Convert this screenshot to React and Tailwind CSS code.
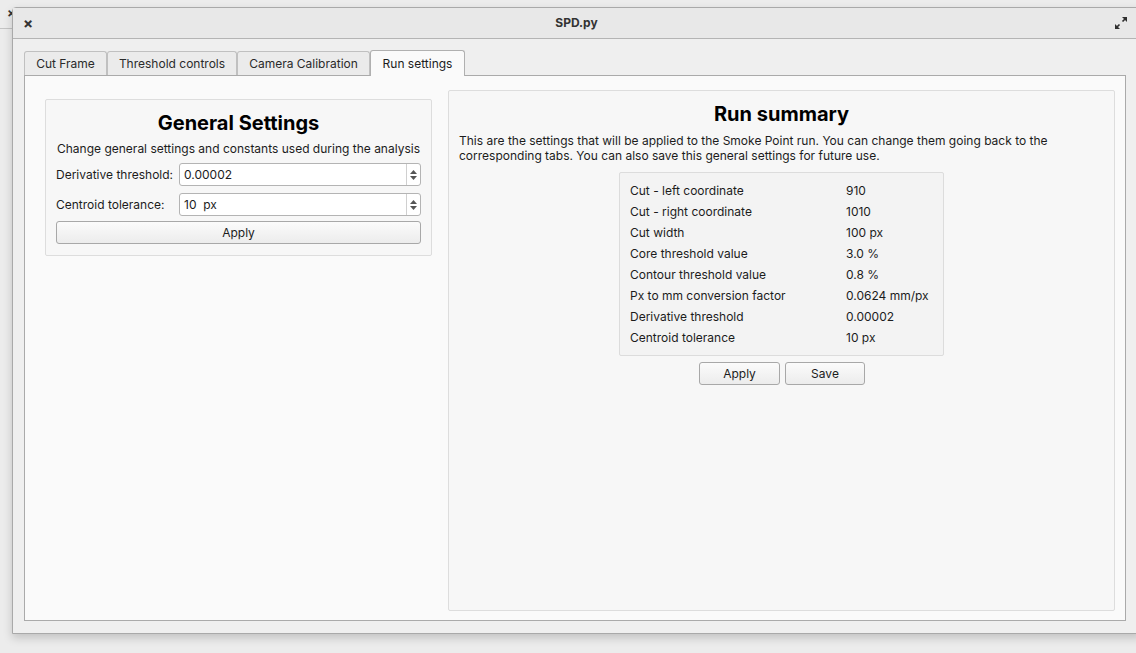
import React from 'react';

const font = { fontFamily: 'Inter, "Noto Sans", "Liberation Sans", sans-serif' };

const summary = [
  ['Cut - left coordinate', '910'],
  ['Cut - right coordinate', '1010'],
  ['Cut width', '100 px'],
  ['Core threshold value', '3.0 %'],
  ['Contour threshold value', '0.8 %'],
  ['Px to mm conversion factor', '0.0624 mm/px'],
  ['Derivative threshold', '0.00002'],
  ['Centroid tolerance', '10 px'],
];

const SpinBox = ({ value }) => (
  <div className="flex h-[23px] flex-1 items-stretch rounded-[3px] border border-[#b4b4b4] bg-white">
    <div className="flex flex-1 items-center whitespace-pre pl-[4px] text-[12px] text-[#1c1c1c]">{value}</div>
    <div className="flex w-[14px] flex-col items-center justify-center gap-[2px] border-l border-[#d0d0d0]">
      <svg width="7" height="4" viewBox="0 0 7 4"><path d="M0 4 L3.5 0 L7 4 Z" fill="#555" /></svg>
      <svg width="7" height="4" viewBox="0 0 7 4"><path d="M0 0 L3.5 4 L7 0 Z" fill="#555" /></svg>
    </div>
  </div>
);

const Button = ({ children, className = '' }) => (
  <button className={`flex h-[23px] items-center justify-center rounded-[3px] border border-[#a8a8a8] bg-gradient-to-b from-[#fbfbfb] to-[#ececec] text-[12px] text-[#1c1c1c] ${className}`}>
    {children}
  </button>
);

const Tab = ({ label, width, active }) => (
  <div
    className={
      active
        ? `flex h-[26px] items-center justify-center rounded-t-[3px] border border-b-0 border-[#b0b0b0] bg-[#fafafa] pt-[1px] text-[12px] text-[#1c1c1c] ${width} relative z-10 -mb-px`
        : `flex h-[24px] items-center justify-center rounded-t-[3px] border border-b-0 border-[#c0c0c0] bg-[#ebebeb] pt-[1px] text-[12px] text-[#2a2a2a] ${width}`
    }
  >
    {label}
  </div>
);

export default function App() {
  return (
    <div className="relative h-[653px] w-[1136px] overflow-hidden bg-[#ececec]" style={font}>
      {/* window behind */}
      <div className="absolute left-0 top-[28px] h-px w-[12px] bg-[#c4c4c4]" />
      <div className="absolute left-[7px] top-[4px] text-[13px] font-bold text-[#333]">×</div>

      <div className="absolute left-[12px] top-[7px] flex h-[627px] w-[1130px] flex-col rounded-t-[4px] border border-[#a9a9a9] bg-[#efefef] shadow-[0_4px_10px_rgba(0,0,0,0.18)]">
        {/* title bar */}
        <div className="flex h-[31px] items-center border-b border-[#b4b4b4] bg-[#e8e8e8] px-[10px]">
          <span className="w-[20px] text-[15px] font-bold leading-none text-[#333]">×</span>
          <div className="flex-1 pr-[4px] text-center text-[12px] font-bold text-[#333]">SPD.py</div>
          <svg width="14" height="14" viewBox="0 0 14 14" className="mr-[3px]">
            <path d="M8 1 H13 V6 Z" fill="#2f2f2f" />
            <path d="M6 13 H1 V8 Z" fill="#2f2f2f" />
            <path d="M11 3 L8.5 5.5 M3 11 L5.5 8.5" stroke="#2f2f2f" strokeWidth="1.6" />
          </svg>
        </div>

        {/* body */}
        <div className="flex flex-1 flex-col pb-[12px] pl-[11px] pr-[11px] pt-[11px]">
          <div className="flex items-end">
            <Tab label="Cut Frame" width="w-[83px]" />
            <Tab label="Threshold controls" width="w-[130px]" />
            <Tab label="Camera Calibration" width="w-[133px]" />
            <Tab label="Run settings" width="w-[95px]" active />
          </div>
          <div className="flex w-[1102px] flex-1 gap-[16px] border border-[#aaaaaa] bg-[#fafafa] pb-[9px] pl-[20px] pr-[10px] pt-[14px]">
            {/* left column */}
            <div className="pt-[9px]">
              <div className="flex w-[387px] flex-col rounded-[2px] border border-[#dddddd] bg-[#f7f7f7] px-[10px] pb-[11px] pt-[9px]">
                <div className="text-center text-[20px] font-bold leading-[28px] text-black">General Settings</div>
                <div className="mt-[3px] whitespace-nowrap text-center text-[12px] leading-[17px] text-[#1c1c1c]">
                  Change general settings and constants used during the analysis
                </div>
                <div className="mt-[6px] flex items-center">
                  <span className="w-[123px] whitespace-nowrap text-[12px] text-[#1c1c1c]">Derivative threshold:</span>
                  <SpinBox value="0.00002" />
                </div>
                <div className="mt-[7px] flex items-center">
                  <span className="w-[123px] whitespace-nowrap text-[12px] text-[#1c1c1c]">Centroid tolerance:</span>
                  <SpinBox value="10  px" />
                </div>
                <Button className="mt-[5px] w-full">Apply</Button>
              </div>
            </div>

            {/* right column */}
            <div className="flex flex-1 flex-col rounded-[2px] border border-[#dddddd] bg-[#f7f7f7] px-[10px] pt-[9px]">
              <div className="text-center text-[20px] font-bold leading-[28px] text-black">Run summary</div>
              <p className="mt-[5px] pr-[40px] text-[12px] leading-[15px] text-[#1c1c1c]">
                This are the settings that will be applied to the Smoke Point run. You can change them going back to the corresponding tabs. You can also save this general settings for future use.
              </p>
              <div className="mt-[9px] flex justify-center">
                <div className="w-[325px] rounded-[2px] border border-[#dcdcdc] bg-[#f3f3f3] px-[10px] py-[7px]">
                  {summary.map(([k, v]) => (
                    <div key={k} className="flex h-[21px] items-center whitespace-nowrap text-[12px] text-[#1c1c1c]">
                      <span className="w-[216px]">{k}</span>
                      <span>{v}</span>
                    </div>
                  ))}
                </div>
              </div>
              <div className="mt-[6px] flex justify-center gap-[5px] pl-[1px]">
                <Button className="w-[81px]">Apply</Button>
                <Button className="w-[80px]">Save</Button>
              </div>
            </div>
          </div>
        </div>
      </div>
    </div>
  );
}
